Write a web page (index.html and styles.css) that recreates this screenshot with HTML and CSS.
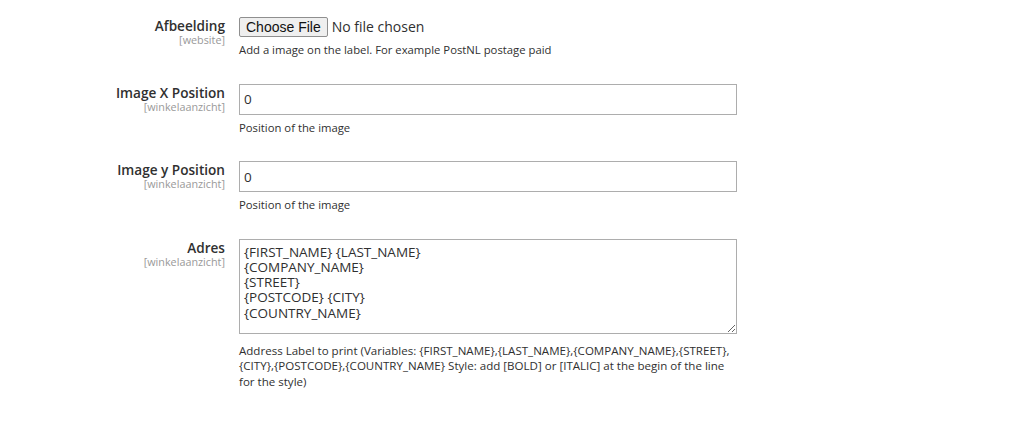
FILE: index.html
```html
<!DOCTYPE html>
<html lang="nl">
<head>
  <meta charset="UTF-8" />
  <title>Label instellingen</title>
  <meta name="viewport" content="width=device-width, initial-scale=1.0" />
  <link rel="stylesheet" href="styles.css">
</head>
<body>
  <div class="config">
    <div class="row row-file">
      <div class="label">
        <span class="title">Afbeelding</span>
        <span class="scope">[website]</span>
      </div>
      <div class="value">
        <input type="file" class="file-input">
        <p class="note">Add a image on the label. For example PostNL postage paid</p>
      </div>
    </div>

    <div class="row">
      <div class="label">
        <span class="title">Image X Position</span>
        <span class="scope">[winkelaanzicht]</span>
      </div>
      <div class="value">
        <input type="text" class="text-input" value="0">
        <p class="note">Position of the image</p>
      </div>
    </div>

    <div class="row">
      <div class="label">
        <span class="title">Image y Position</span>
        <span class="scope">[winkelaanzicht]</span>
      </div>
      <div class="value">
        <input type="text" class="text-input" value="0">
        <p class="note">Position of the image</p>
      </div>
    </div>

    <div class="row">
      <div class="label">
        <span class="title">Adres</span>
        <span class="scope">[winkelaanzicht]</span>
      </div>
      <div class="value">
        <textarea class="text-area">{FIRST_NAME} {LAST_NAME}
{COMPANY_NAME}
{STREET}
{POSTCODE} {CITY}
{COUNTRY_NAME}</textarea>
        <p class="note note-long">Address Label to print (Variables: {FIRST_NAME},{LAST_NAME},{COMPANY_NAME},{STREET},{CITY},{POSTCODE},{COUNTRY_NAME} Style: add [BOLD] or [ITALIC] at the begin of the line for the style)</p>
      </div>
    </div>
  </div>
</body>
</html>
```

FILE: styles.css
```css
* {
  box-sizing: border-box;
}

body {
  font-family: 'Open Sans', sans-serif;
  font-size: 14px;
  background-color: #fff;
  color: #303030;
  margin: 0;
  padding: 0;
}

.config {
  padding-top: 17px;
}

.row {
  display: grid;
  grid-template-columns: 225px 498px;
  column-gap: 14px;
  margin-bottom: 26px;
}

.row-file {
  margin-bottom: 26px;
}

.label {
  display: flex;
  flex-direction: column;
  align-items: flex-end;
  text-align: right;
}

.label .title {
  font-weight: 600;
  font-size: 13.6px;
  line-height: 17px;
}

.label .scope {
  font-size: 10.8px;
  line-height: 12px;
  color: #999;
}

.file-input {
  font-family: 'Open Sans', sans-serif;
  font-size: 14px;
  color: #303030;
  height: 23px;
  display: block;
  margin: 0;
}

.file-input::file-selector-button {
  font-family: 'Liberation Sans', Arial, sans-serif;
  font-size: 14px;
  color: #111;
  background: #efefef;
  border: 1px solid #8f8f8f;
  border-radius: 2px;
  padding: 1px 6px;
  height: 20px;
  margin-right: 4px;
}

.text-input {
  display: block;
  width: 100%;
  height: 31px;
  border: 1px solid #adadad;
  padding: 0 4px;
  font-family: 'Open Sans', sans-serif;
  font-size: 13.5px;
  color: #303030;
  margin: 0;
}

.text-area {
  display: block;
  width: 100%;
  height: 95px;
  border: 1px solid #adadad;
  padding: 5px 4px;
  font-family: 'Open Sans', sans-serif;
  font-size: 13.5px;
  line-height: 15.25px;
  color: #303030;
  margin: 0;
}

.note {
  margin: 5px 0 0;
  font-size: 11.3px;
  line-height: 15.5px;
}

.row-file .note {
  margin-top: 2px;
}

.note-long {
  margin-top: 9px;
  font-size: 11.55px;
}
```
